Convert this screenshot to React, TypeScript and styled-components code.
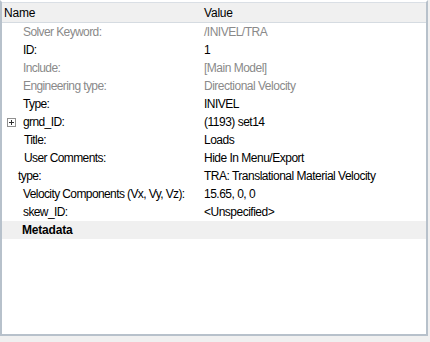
import React from "react";
import styled, { createGlobalStyle } from "styled-components";

const Global = createGlobalStyle`
  html, body { margin: 0; padding: 0; background: #f0f0f0; }
  body { font-family: "Liberation Sans", Arial, sans-serif; font-size: 12px; }
`;

const Panel = styled.div`
  box-sizing: border-box;
  width: 428px;
  height: 336px;
  background: #ffffff;
  border-left: 2px solid #b7c1cb;
  border-right: 2px solid #b7c1cb;
  border-top: 2px solid #ffffff;
  border-bottom: 2px solid #b7c1cb;
  display: flex;
  flex-direction: column;
`;

const Header = styled.div`
  display: grid;
  grid-template-columns: 200px 1fr;
  height: 19px;
  background: #f0f0f0;
  border-top: 1px solid #dadfe5;
  border-bottom: 1px solid #d5dbe1;
  align-items: center;
  color: #000;
`;

const HeaderCell = styled.div<{ $pad: number }>`
  padding-left: ${(p) => p.$pad}px;
  font-size: 12px;
  letter-spacing: -0.2px;
`;

const Row = styled.div<{ $band?: boolean }>`
  display: grid;
  grid-template-columns: 200px 1fr;
  height: 18px;
  align-items: center;
  background: ${(p) => (p.$band ? "#f0f0f0" : "transparent")};
`;

const NameCell = styled.div<{ $indent: number; $muted?: boolean; $bold?: boolean }>`
  display: flex;
  align-items: center;
  padding-left: ${(p) => p.$indent}px;
  color: ${(p) => (p.$muted ? "#8a8a8a" : "#000")};
  font-weight: ${(p) => (p.$bold ? 700 : 400)};
  font-size: 12px;
  letter-spacing: ${(p) => (p.$bold ? "-0.2px" : "-0.6px")};
  white-space: nowrap;
  position: relative;
`;

const ValueCell = styled.div<{ $muted?: boolean }>`
  padding-left: 2px;
  color: ${(p) => (p.$muted ? "#8a8a8a" : "#000")};
  font-size: 12px;
  letter-spacing: -0.5px;
  white-space: nowrap;
`;

const Expander = styled.span`
  position: absolute;
  left: 5px;
  top: 50%;
  margin-top: -4px;
  width: 7px;
  height: 7px;
  border: 1px solid #909090;
  background: #fff;
  &::before {
    content: "";
    position: absolute;
    left: 1px;
    top: 3px;
    width: 5px;
    height: 1px;
    background: #303030;
  }
  &::after {
    content: "";
    position: absolute;
    left: 3px;
    top: 1px;
    width: 1px;
    height: 5px;
    background: #303030;
  }
`;

type R = { name: string; value: string; muted?: boolean; indent?: number; expand?: boolean };

const rows: R[] = [
  { name: "Solver Keyword:", value: "/INIVEL/TRA", muted: true },
  { name: "ID:", value: "1" },
  { name: "Include:", value: "[Main Model]", muted: true },
  { name: "Engineering type:", value: "Directional Velocity", muted: true },
  { name: "Type:", value: "INIVEL" },
  { name: "grnd_ID:", value: "(1193) set14", expand: true },
  { name: "Title:", value: "Loads", indent: 22 },
  { name: "User Comments:", value: "Hide In Menu/Export", indent: 22 },
  { name: "type:", value: "TRA: Translational Material Velocity", indent: 16 },
  { name: "Velocity Components (Vx, Vy, Vz):", value: "15.65, 0, 0" },
  { name: "skew_ID:", value: "<Unspecified>" },
];

export default function App() {
  return (
    <>
      <Global />
      <Panel>
        <Header>
          <HeaderCell $pad={2}>Name</HeaderCell>
          <HeaderCell $pad={2}>Value</HeaderCell>
        </Header>
        {rows.map((r) => (
          <Row key={r.name}>
            <NameCell $indent={r.indent ?? 21} $muted={r.muted}>
              {r.expand && <Expander />}
              {r.name}
            </NameCell>
            <ValueCell $muted={r.muted}>{r.value}</ValueCell>
          </Row>
        ))}
        <Row $band>
          <NameCell $indent={20} $bold>
            Metadata
          </NameCell>
          <ValueCell />
        </Row>
      </Panel>
    </>
  );
}
